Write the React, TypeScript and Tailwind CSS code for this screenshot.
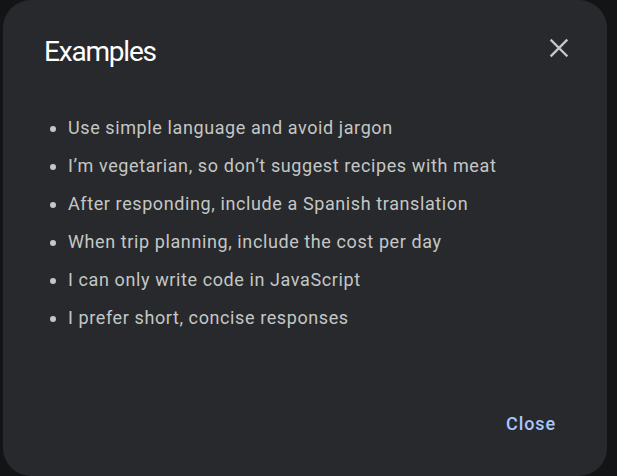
import React from 'react';

const items = [
  'Use simple language and avoid jargon',
  'I’m vegetarian, so don’t suggest recipes with meat',
  'After responding, include a Spanish translation',
  'When trip planning, include the cost per day',
  'I can only write code in JavaScript',
  'I prefer short, concise responses',
];

const App: React.FC = () => {
  return (
    <div className="w-[617px] h-[476px] bg-[#131416] pl-[3px] pr-[10px] overflow-hidden" style={{ fontFamily: 'Roboto, "Noto Sans", sans-serif' }}>
      <div className="w-[604px] h-[476px] bg-[#28292c] rounded-[28px] flex flex-col">
        <div className="flex items-start justify-between pl-[41px] pr-[36px] pt-[32px]">
          <h2 className="text-[28px] leading-[40px] tracking-[-1.2px] text-white">Examples</h2>
          <button className="mt-[4px] text-[#c4c7c5]">
            <svg width="24" height="24" viewBox="0 0 24 24" fill="none" stroke="currentColor" strokeWidth="2.4" strokeLinecap="square">
              <path d="M4.5 4.5l15 15M19.5 4.5l-15 15" />
            </svg>
          </button>
        </div>
        <ul className="mt-[37px] pl-[65px] pr-[24px] list-disc marker:text-[#c4c7c5] flex flex-col">
          {items.map((t) => (
            <li key={t} className="text-[18px] leading-[38px] tracking-[0.6px] text-[#c4c7c5]">
              {t}
            </li>
          ))}
        </ul>
        <div className="mt-auto flex justify-end pr-[41px] pb-[31px]">
          <button className="text-[18px] font-medium tracking-[0.9px] text-[#a8c7fa] px-[10px] py-[8px]">Close</button>
        </div>
      </div>
    </div>
  );
};

export default App;
